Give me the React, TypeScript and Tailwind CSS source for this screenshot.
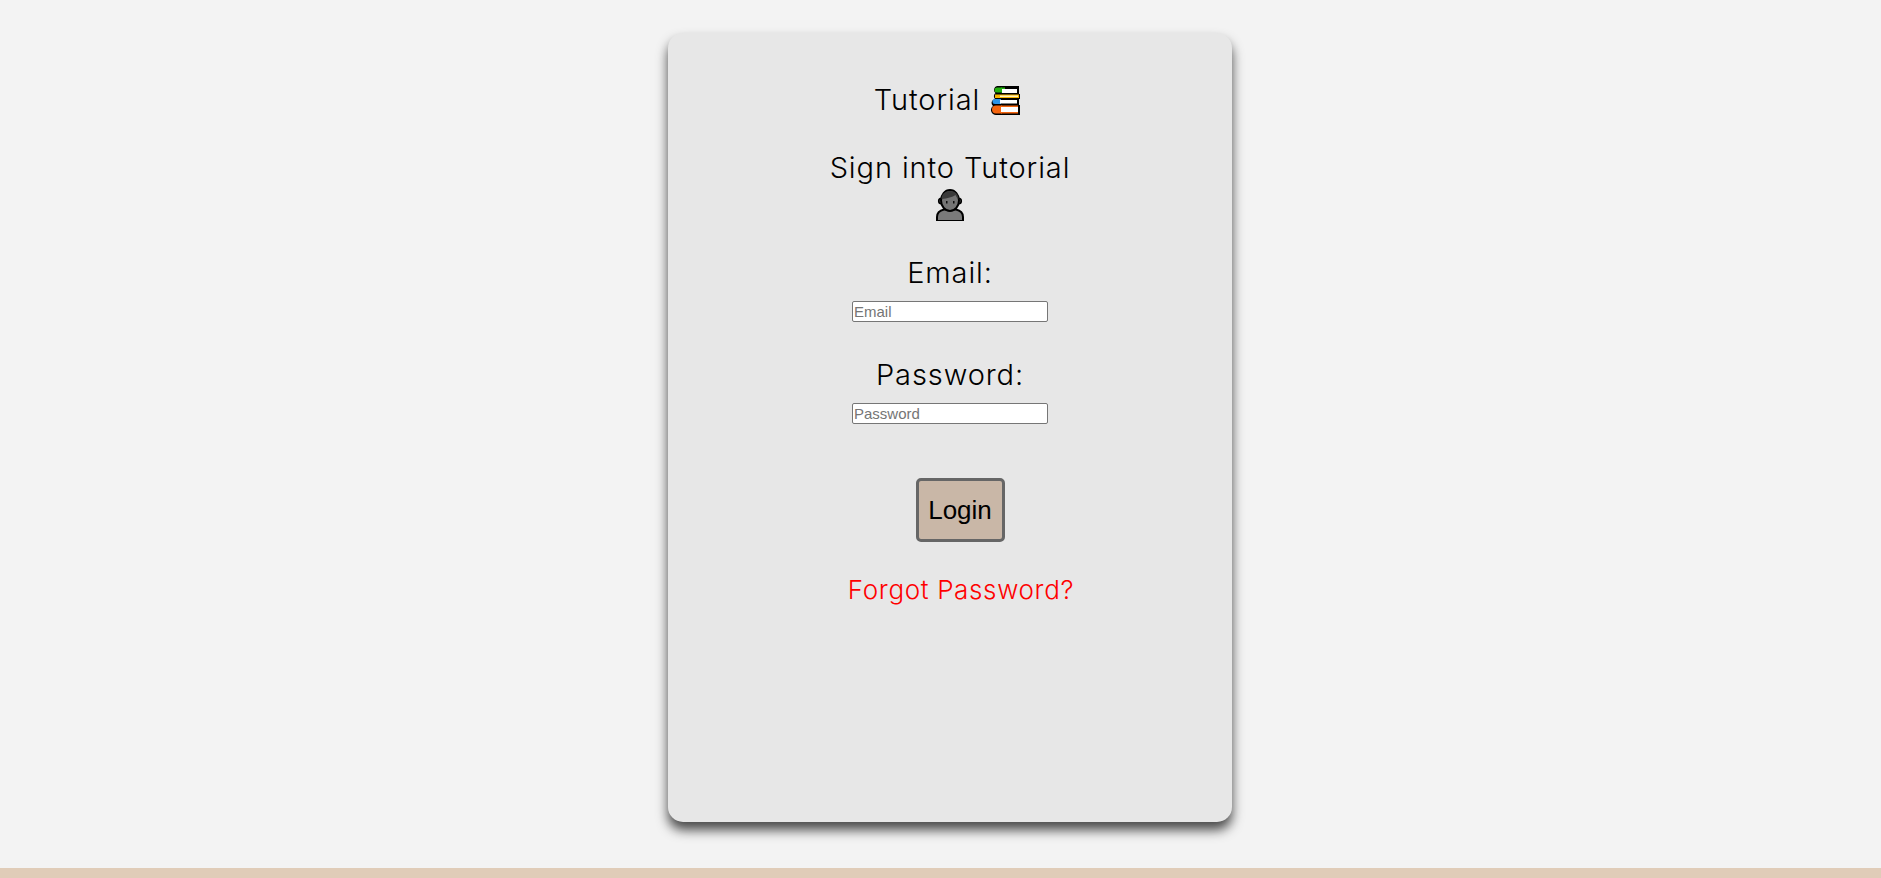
import React from 'react';

const BooksIcon = () => (
  <svg width="30" height="29" viewBox="0 0 30 29" className="block">
    {/* black silhouette of the stack */}
    <path d="M7 0h22v8h1v5h-1v6h1v10H6a5 5 0 0 1-3-9 4 4 0 0 1 2-7 4 4 0 0 1 .5-6A4 4 0 0 1 7 0z" fill="#000" />
    {/* top book */}
    <path d="M7 1.500h5v5H7a2.500 2.500 0 0 1 0-5z" fill="#22b00f" />
    <rect x="11" y="1.500" width="4" height="5" fill="#22b00f" />
    <rect x="12" y="3" width="15" height="4" fill="#fff" />
    {/* yellow book */}
    <path d="M5 8.500h24v3.500H5z" fill="#f7b500" />
    <rect x="10" y="9.500" width="18" height="1.500" fill="#fff4c4" />
    {/* blue book */}
    <path d="M5 13h5v5H5a2.500 2.500 0 0 1 0-5z" fill="#2b93e6" />
    <rect x="8" y="13" width="3" height="5" fill="#2b93e6" />
    <rect x="10" y="14" width="17" height="3.500" fill="#fff" />
    {/* orange book */}
    <path d="M6 19.500h6v8H6a4 4 0 0 1 0-8z" fill="#f4650f" />
    <rect x="11" y="19.500" width="17" height="1.500" fill="#f4650f" />
    <rect x="11" y="26" width="17" height="1.500" fill="#f4650f" />
    <rect x="11" y="21" width="17" height="5" fill="#fff" />
  </svg>
);

const PersonIcon = () => (
  <svg width="28" height="32" viewBox="0 0 28 32" className="block">
    <path d="M1 32v-4c0-4 2.500-6.500 7-7.500h12c4.500 1 7 3.500 7 7.500v4z" fill="#7a7a7a" stroke="#000" strokeWidth="2" />
    <circle cx="5.500" cy="12" r="2.800" fill="#666" stroke="#000" strokeWidth="1.600" />
    <circle cx="22.500" cy="12" r="2.800" fill="#666" stroke="#000" strokeWidth="1.600" />
    <ellipse cx="14" cy="11.500" rx="9" ry="10.500" fill="#757575" stroke="#000" strokeWidth="2" />
    <path d="M5.500 10C5.500 5 9 2 14 2s8.500 3 8.500 8c-1.500-1-2.500-2.500-3-4-3 2-8 3.500-14 4z" fill="#3a3a3a" />
    <rect x="10" y="12" width="1.500" height="2.500" fill="#111" />
    <rect x="17" y="12" width="1.500" height="2.500" fill="#111" />
  </svg>
);

const headingFont = "font-['Inter','Liberation_Sans',sans-serif] font-light text-[29px] leading-[34px] tracking-[0.9px] text-black";
const inputClass = "block w-[196px] h-[21px] bg-white border border-[#767676] rounded-[2px] px-[1px] pt-[1px] text-[15px] font-['Liberation_Sans',Arial,sans-serif] placeholder:text-[#757575] outline-none";

export default function App() {
  return (
    <div className="min-h-screen h-[878px] flex flex-col bg-[#f3f3f3] overflow-hidden">
      <div className="flex-1 flex justify-center pl-[19px] pt-[33px]">
        <div className="w-[564px] h-[789px] bg-[#e7e7e7] rounded-[15px] shadow-[0_8px_12px_0_rgba(0,0,0,0.7)] flex flex-col items-center pt-[50px]">
          <div className="flex items-center gap-[10px] mr-[6px]">
            <h1 className={headingFont}>Tutorial</h1>
            <BooksIcon />
          </div>
          <h2 className={`${headingFont} mt-[34px]`}>Sign into Tutorial</h2>
          <div className="mt-[4px]">
            <PersonIcon />
          </div>

          <label className={`${headingFont} mt-[35px]`}>Email:</label>
          <input className={`${inputClass} mt-[11px]`} placeholder="Email" />

          <label className={`${headingFont} mt-[36px]`}>Password:</label>
          <input className={`${inputClass} mt-[11px]`} placeholder="Password" type="password" />

          <button className="mt-[54px] ml-[20px] w-[89px] h-[64px] bg-[#c9b7a7] border-[3px] border-[#666666] rounded-[5px] text-[26px] text-black font-['Liberation_Sans',Arial,sans-serif]">
            Login
          </button>
          <a href="#" className="mt-[31px] ml-[22px] font-['Inter','Liberation_Sans',sans-serif] font-light text-[26px] leading-[34px] tracking-[0.65px] text-[#ff0000]">
            Forgot Password?
          </a>
        </div>
      </div>
      <div className="h-[10px] bg-[#e0ccb8]" />
    </div>
  );
}
